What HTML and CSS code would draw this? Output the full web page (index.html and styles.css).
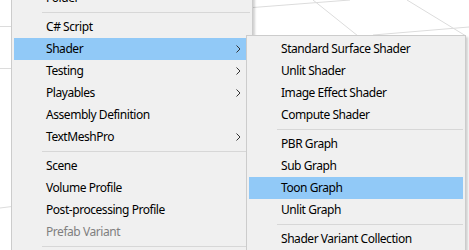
FILE: index.html
```html
<!DOCTYPE html>
<html>
<head>
<meta charset="utf-8">
<link rel="stylesheet" href="styles.css">
</head>
<body>
<div class="scene">
  <svg class="grid" width="469" height="250" viewBox="0 0 469 250">
    <line x1="0" y1="26.5" x2="12" y2="26.5"/>
    <line x1="0" y1="68.5" x2="12" y2="68.5"/>
    <line x1="0" y1="208" x2="12" y2="206.5"/>
    <line x1="253" y1="7.5" x2="350" y2="0"/>
    <line x1="313" y1="0" x2="358" y2="36"/>
    <line x1="407" y1="0" x2="466" y2="36"/>
    <line x1="373" y1="35" x2="469" y2="27"/>
  </svg>

  <div class="menu menu-main">
    <div class="item">Folder</div>
    <div class="sep"></div>
    <div class="item">C# Script</div>
    <div class="item active">Shader<svg class="chev" width="5" height="8" viewBox="0 0 5 8"><polyline points="0.5,0.5 4,4 0.5,7.5"/></svg></div>
    <div class="item">Testing<svg class="chev" width="5" height="8" viewBox="0 0 5 8"><polyline points="0.5,0.5 4,4 0.5,7.5"/></svg></div>
    <div class="item">Playables<svg class="chev" width="5" height="8" viewBox="0 0 5 8"><polyline points="0.5,0.5 4,4 0.5,7.5"/></svg></div>
    <div class="item">Assembly Definition</div>
    <div class="item">TextMeshPro<svg class="chev" width="5" height="8" viewBox="0 0 5 8"><polyline points="0.5,0.5 4,4 0.5,7.5"/></svg></div>
    <div class="sep"></div>
    <div class="item">Scene</div>
    <div class="item">Volume Profile</div>
    <div class="item">Post-processing Profile</div>
    <div class="item disabled">Prefab Variant</div>
    <div class="sep"></div>
    <div class="tail"></div>
  </div>

  <div class="menu menu-sub">
    <div class="item">Standard Surface Shader</div>
    <div class="item">Unlit Shader</div>
    <div class="item">Image Effect Shader</div>
    <div class="item">Compute Shader</div>
    <div class="sep"></div>
    <div class="item">PBR Graph</div>
    <div class="item">Sub Graph</div>
    <div class="item active">Toon Graph</div>
    <div class="item">Unlit Graph</div>
    <div class="sep"></div>
    <div class="item">Shader Variant Collection</div>
  </div>
</div>
</body>
</html>
```
FILE: styles.css
```css
html, body {
  margin: 0;
  padding: 0;
  background: #ffffff;
  overflow: hidden;
}

.scene {
  position: relative;
  width: 469px;
  height: 250px;
  overflow: hidden;
  font-family: "Segoe UI", "Noto Sans", "Open Sans", sans-serif;
  font-size: 12px;
  letter-spacing: -0.45px;
  color: #000000;
}

.grid {
  position: absolute;
  left: 0;
  top: 0;
}

.grid line {
  stroke: #dcdcdc;
  stroke-width: 1;
}

.menu {
  position: absolute;
  box-sizing: border-box;
  background: #f0f0f0;
  border: 1px solid #cccccc;
  padding: 2px;
  display: flex;
  flex-direction: column;
  box-shadow: 2px 2px 2px rgba(0, 0, 0, 0.18);
}

.menu-main {
  left: 11px;
  top: -16px;
  width: 242px;
}

.menu-sub {
  left: 246px;
  top: 35px;
  width: 220px;
}

.item {
  height: 22px;
  line-height: 22px;
  padding-left: 32px;
  padding-right: 9px;
  display: flex;
  align-items: center;
  justify-content: space-between;
  white-space: nowrap;
}

.item.active {
  background: #91c9f7;
}

.item.disabled {
  color: #7f7f7f;
}

.sep {
  height: 7px;
  margin-left: 28px;
  display: flex;
  align-items: center;
}

.sep::before {
  content: "";
  display: block;
  width: 100%;
  height: 1px;
  background: #d7d7d7;
}

.tail {
  height: 22px;
}

.chev polyline {
  fill: none;
  stroke: #333333;
  stroke-width: 1;
}
```
